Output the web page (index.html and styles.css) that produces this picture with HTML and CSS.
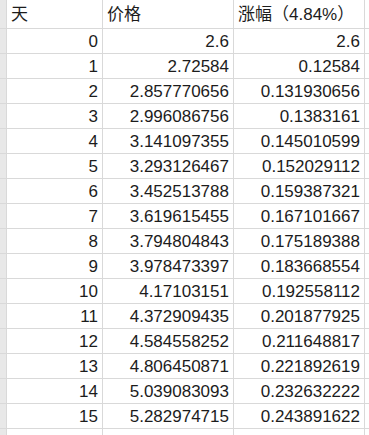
FILE: index.html
```html
<!DOCTYPE html>
<html lang="zh">
<head>
<meta charset="utf-8">
<link rel="stylesheet" href="styles.css">
</head>
<body>
<div class="sheet">
  <div class="row head"><div class="rh"></div><div class="c l">天</div><div class="c l">价格</div><div class="c l">涨幅（4.84%）</div><div class="c"></div></div>
  <div class="row"><div class="rh"></div><div class="c">0</div><div class="c">2.6</div><div class="c">2.6</div><div class="c"></div></div>
  <div class="row"><div class="rh"></div><div class="c">1</div><div class="c">2.72584</div><div class="c">0.12584</div><div class="c"></div></div>
  <div class="row"><div class="rh"></div><div class="c">2</div><div class="c">2.857770656</div><div class="c">0.131930656</div><div class="c"></div></div>
  <div class="row"><div class="rh"></div><div class="c">3</div><div class="c">2.996086756</div><div class="c">0.1383161</div><div class="c"></div></div>
  <div class="row"><div class="rh"></div><div class="c">4</div><div class="c">3.141097355</div><div class="c">0.145010599</div><div class="c"></div></div>
  <div class="row"><div class="rh"></div><div class="c">5</div><div class="c">3.293126467</div><div class="c">0.152029112</div><div class="c"></div></div>
  <div class="row"><div class="rh"></div><div class="c">6</div><div class="c">3.452513788</div><div class="c">0.159387321</div><div class="c"></div></div>
  <div class="row"><div class="rh"></div><div class="c">7</div><div class="c">3.619615455</div><div class="c">0.167101667</div><div class="c"></div></div>
  <div class="row"><div class="rh"></div><div class="c">8</div><div class="c">3.794804843</div><div class="c">0.175189388</div><div class="c"></div></div>
  <div class="row"><div class="rh"></div><div class="c">9</div><div class="c">3.978473397</div><div class="c">0.183668554</div><div class="c"></div></div>
  <div class="row"><div class="rh"></div><div class="c">10</div><div class="c">4.17103151</div><div class="c">0.192558112</div><div class="c"></div></div>
  <div class="row"><div class="rh"></div><div class="c">11</div><div class="c">4.372909435</div><div class="c">0.201877925</div><div class="c"></div></div>
  <div class="row"><div class="rh"></div><div class="c">12</div><div class="c">4.584558252</div><div class="c">0.211648817</div><div class="c"></div></div>
  <div class="row"><div class="rh"></div><div class="c">13</div><div class="c">4.806450871</div><div class="c">0.221892619</div><div class="c"></div></div>
  <div class="row"><div class="rh"></div><div class="c">14</div><div class="c">5.039083093</div><div class="c">0.232632222</div><div class="c"></div></div>
  <div class="row"><div class="rh"></div><div class="c">15</div><div class="c">5.282974715</div><div class="c">0.243891622</div><div class="c"></div></div>
  <div class="row"><div class="rh"></div><div class="c"></div><div class="c"></div><div class="c"></div><div class="c"></div></div>
</div>
</body>
</html>
```
FILE: styles.css
```css
html, body {
  margin: 0;
  padding: 0;
  background: #fff;
  overflow: hidden;
}
.sheet {
  width: 369px;
  display: flex;
  flex-direction: column;
  gap: 1px;
  background: #d9d9d9;
  font-family: "Liberation Sans", "Noto Sans CJK SC", sans-serif;
  font-size: 17px;
  color: #1c1c1c;
}
.row {
  display: grid;
  grid-template-columns: 6px 95px 130px 130px 1fr;
  column-gap: 1px;
  height: 24px;
}
.row.head {
  height: 28px;
}
.rh {
  background: #e8e8e8;
}
.c {
  background: #fff;
  text-align: right;
  padding: 2px 4px 0 4px;
  line-height: 22px;
  white-space: nowrap;
  overflow: hidden;
}
.head .c {
  padding-top: 3px;
  line-height: 24px;
}
.c.l {
  text-align: left;
  padding-left: 4px;
}
```
